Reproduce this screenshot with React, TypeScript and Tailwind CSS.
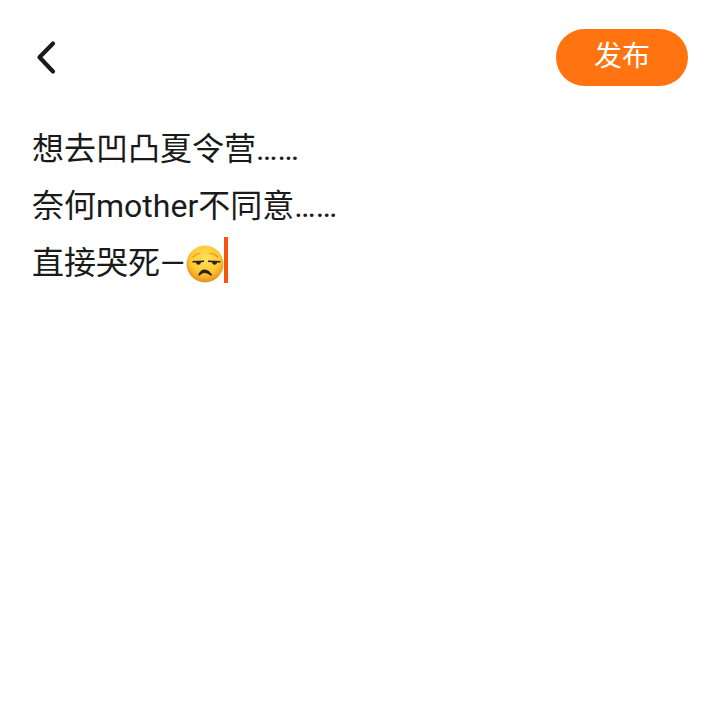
import React from 'react';

const UnamusedEmoji: React.FC = () => (
  <svg width="40" height="40" viewBox="0 0 40 40" className="shrink-0">
    <defs>
      <radialGradient id="face" cx="50%" cy="36%" r="64%">
        <stop offset="0%" stopColor="#ffe15a" />
        <stop offset="60%" stopColor="#fdc936" />
        <stop offset="100%" stopColor="#e88f18" />
      </radialGradient>
    </defs>
    <circle cx="20" cy="20" r="18.5" fill="url(#face)" />
    {/* brows */}
    <path d="M8 13 Q11 9.5 15 9.5" fill="none" stroke="#dc8f26" strokeWidth="1.2" strokeLinecap="round" />
    <path d="M25 9.5 Q29.5 9.5 32.5 13" fill="none" stroke="#dc8f26" strokeWidth="1.2" strokeLinecap="round" />
    {/* eyes */}
    <path d="M7.5 17 L19 16.4 L19 18 L16 18.2 Q15.4 20.8 13.4 20.8 Q11.4 20.8 10.8 18.4 L7.5 18.6 Z" fill="#2e2018" />
    <path d="M23 16.4 L35.5 17 L35.5 18.6 L32.2 18.4 Q31.6 20.8 29.6 20.8 Q27.6 20.8 27 18.2 L23 18 Z" fill="#2e2018" />
    {/* mouth */}
    <path d="M13.4 30.4 Q15.8 25.4 19.8 25.6 Q23.8 25.8 26.8 30.6 Q27.4 32.2 25.6 31.6 Q22.6 29 19.8 29 Q17.2 29 15 31.2 Q13 31.8 13.4 30.4 Z" fill="#2e2018" />
  </svg>
);

export default function App() {
  return (
    <div className="w-[720px] h-[712px] bg-white overflow-hidden font-['Roboto','Noto_Sans_CJK_SC',sans-serif]">
      {/* Header */}
      <div className="flex items-center justify-between pt-[29px] px-[32px]">
        <svg width="28" height="36" viewBox="0 0 28 36" fill="none">
          <path d="M21 3.5 L7.5 17.3 L21 31.5" stroke="#1a1a1a" strokeWidth="4.2" strokeLinecap="round" strokeLinejoin="round" />
        </svg>
        <button className="w-[132px] h-[57px] rounded-full bg-[#ff7310] text-white text-[28px] leading-none pb-[1px]">
          发布
        </button>
      </div>

      {/* Post text */}
      <div className="pl-[32px] pt-[35px] text-[32px] leading-[57px] text-[#1a1a1a]">
        <div>想去凹凸夏令营……</div>
        <div>奈何mother不同意……</div>
        <div className="flex items-center h-[57px]">
          <span className="w-[153px] shrink-0">直接哭死—</span>
          <UnamusedEmoji />
          <span className="w-[4px] h-[46px] bg-[#f4540c] -ml-[1px] mb-[8px]" />
        </div>
      </div>
    </div>
  );
}
